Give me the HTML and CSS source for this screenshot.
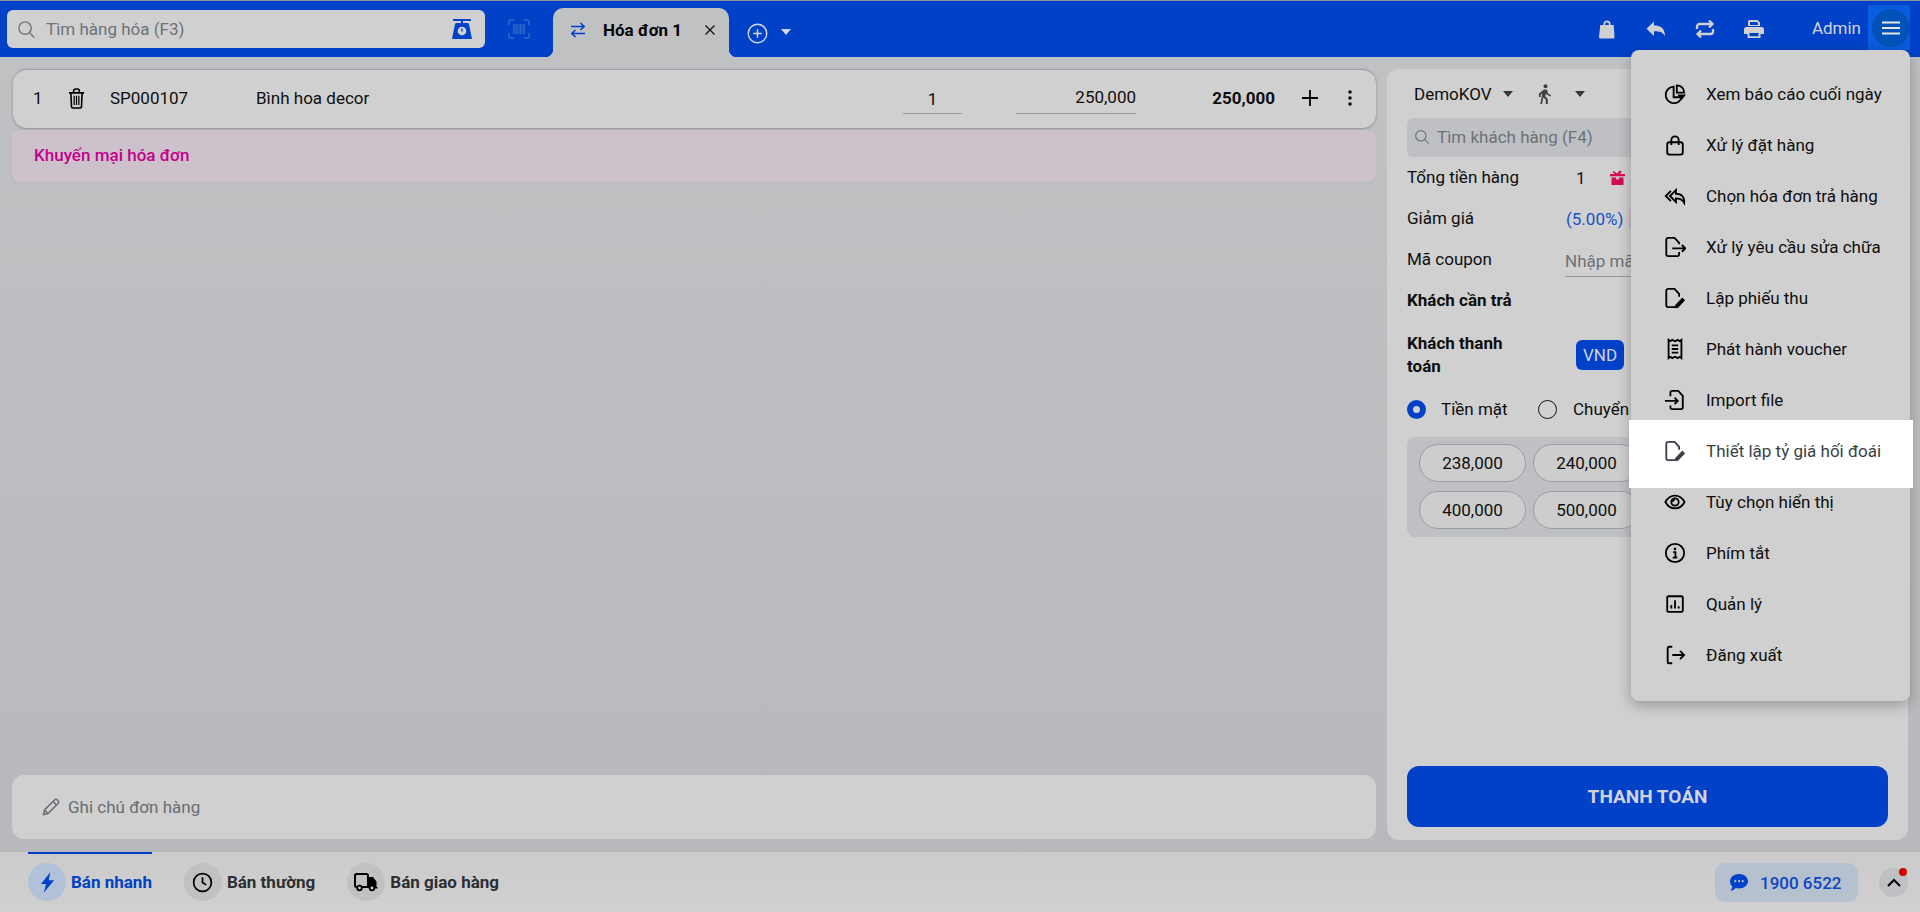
FILE: index.html
```html
<!DOCTYPE html>
<html lang="vi">
<head>
<meta charset="utf-8">
<title>Hóa đơn 1</title>
<link rel="stylesheet" href="styles.css">
</head>
<body>
<header class="topbar">
  <div class="search">
    <svg class="ic-search" viewBox="0 0 20 20"><circle cx="8.500" cy="8.500" r="6.500"/><path d="M13.300 13.300l5 5"/></svg>
    <span class="search-text">Tìm hàng hóa (F3)</span>
    <svg class="ic-scale" viewBox="0 0 20 20"><path d="M1 0h18v2H11v2h4.500c.8 0 1.300.4 1.500 1.200L20 20H0L3 5.200C3.200 4.400 3.700 4 4.500 4H9V2H1z"/><circle cx="10" cy="12" r="4.300" fill="#d0d0d0"/><path d="M10 9.500v3" stroke="#0041c7" stroke-width="1.400"/></svg>
  </div>
  <svg class="ic-barcode" viewBox="0 0 22 20"><path d="M1 6V2.500A1.500 1.500 0 0 1 2.500 1H6M16 1h3.500A1.500 1.500 0 0 1 21 2.500V6M21 14v3.500a1.500 1.500 0 0 1-1.500 1.500H16M6 19H2.500A1.500 1.500 0 0 1 1 17.500V14"/><path d="M5.500 5v10M6.900 5v10M8.300 5v10M9.700 5v10M11.100 5v10M12.500 5v10M13.900 5v10M15.300 5v10M16.500 5v10" stroke-width=".9"/></svg>
  <div class="tab">
    <svg class="ic-swap" viewBox="0 0 18 18"><path d="M2 5.500h13M11.500 2l3.700 3.500L11.500 9M16 12.500H3M6.500 9l-3.700 3.500L6.500 16"/></svg>
    <span class="tab-label">Hóa đơn 1</span>
    <svg class="ic-close" viewBox="0 0 12 12"><path d="M1.500 1.500l9 9M10.500 1.500l-9 9"/></svg>
  </div>
  <svg class="ic-plus-circle" viewBox="0 0 22 22"><circle cx="11" cy="11" r="9.700"/><path d="M11 6.500v9M6.500 11h9"/></svg>
  <span class="caret caret-light"></span>
  <div class="top-actions">
    <svg class="top-ic" viewBox="0 0 20 20"><path d="M6.500 6V5a3.500 3.500 0 0 1 7 0v1h3.200l.8 12a1.500 1.500 0 0 1-1.500 1.500H3.500A1.500 1.500 0 0 1 2 18l1.300-12zM8.200 6h3.600V5a1.800 1.800 0 0 0-3.600 0z" fill-rule="evenodd"/></svg>
    <svg class="top-ic" viewBox="0 0 20 20"><path d="M8 2.500v4c6.500 0 11 2.500 11 11-1.700-4-5-5.200-11-5.200V17L.5 9.700z"/></svg>
    <svg class="top-ic ic-retweet" viewBox="0 0 20 20"><path d="M2 10V7.500A2.500 2.500 0 0 1 4.500 5H17M14 1.500L17.500 5 14 8.500M18 10v2.500a2.500 2.500 0 0 1-2.500 2.500H3M6 11.500L2.500 15 6 18.500"/></svg>
    <svg class="top-ic" viewBox="0 0 20 20"><path d="M4 7V2.500A1.500 1.500 0 0 1 5.500 1h8L16 3.500V7zM6 3v3h8V4l-1-1z" fill-rule="evenodd"/><path d="M2.500 8h15A2.500 2.500 0 0 1 20 10.500V15h-3.500v4h-13v-4H0v-4.500A2.500 2.500 0 0 1 2.500 8zM5.500 14v3.200h9V14z" fill-rule="evenodd"/></svg>
    <span class="admin">Admin</span>
    <button class="menu-btn"><span class="menu-circle"><svg viewBox="0 0 18 14"><path d="M0 1.500h18M0 7h18M0 12.500h18"/></svg></span></button>
  </div>
</header>

<main class="workspace">
  <section class="left-col">
    <div class="line-row">
      <span class="line-no">1</span>
      <svg class="ic-trash" viewBox="0 0 18 22"><path d="M1 5h16M6 5V3a2 2 0 0 1 2-2h2a2 2 0 0 1 2 2v2M3 5l.7 14.500A1.500 1.500 0 0 0 5.200 21h7.600a1.500 1.500 0 0 0 1.500-1.500L15 5"/><path d="M6.500 8v10M9 8v10M11.500 8v10" stroke-width="1.300"/></svg>
      <span class="line-code">SP000107</span>
      <span class="line-name">Bình hoa decor</span>
      <span class="line-qty">1</span>
      <span class="line-price">250,000</span>
      <span class="line-total">250,000</span>
      <svg class="ic-plus" viewBox="0 0 16 16"><path d="M8 0v16M0 8h16"/></svg>
      <svg class="ic-dots" viewBox="0 0 4 16"><circle cx="2" cy="2" r="1.800"/><circle cx="2" cy="8" r="1.800"/><circle cx="2" cy="14" r="1.800"/></svg>
    </div>
    <div class="promo">Khuyến mại hóa đơn</div>
    <div class="note">
      <svg class="ic-pencil" viewBox="0 0 18 18"><path d="M1.500 16.500l1-4.500L12.500 2a2 2 0 0 1 2.800 0l.7.700a2 2 0 0 1 0 2.800L6 15.500zM2.500 12L6 15.500M11 3.500l3.500 3.500"/></svg>
      <span>Ghi chú đơn hàng</span>
    </div>
  </section>

  <aside class="panel">
    <div class="customer-top">
      <span class="store">DemoKOV</span>
      <span class="caret caret-dark"></span>
      <svg class="ic-walk" viewBox="0 0 14 20"><circle cx="7.500" cy="2.300" r="2"/><path d="M6 5.500l3 .3 1 3.700 3 1.500-.7 1.400-3.700-1.800-.5-1.600-.8 3.300 2.500 2.700V20H7.800v-4.200L5.400 13.300 4 20H2.300l2-10.300-1.600.8V13H1V9.500z"/></svg>
      <span class="caret caret-dark caret-walk"></span>
    </div>
    <div class="customer-search">
      <svg class="ic-search" viewBox="0 0 20 20"><circle cx="8.500" cy="8.500" r="6.500"/><path d="M13.300 13.300l5 5"/></svg>
      <span>Tìm khách hàng (F4)</span>
    </div>
    <div class="sum-row">
      <span class="sum-label">Tổng tiền hàng</span>
      <span class="sum-count">1</span>
      <svg class="ic-gift" viewBox="0 0 15 15"><path d="M3.500 1l3.700 2.500L9.500.5 12 1.500 9.500 4H15v2.300H0V4h5L2.500 2zM1.500 7.500h4.700v2h2.600v-2h4.700V15H1.500z"/></svg>
    </div>
    <div class="sum-row">
      <span class="sum-label">Giảm giá</span>
      <span class="sum-percent">(5.00%)</span>
      <span class="sum-chip"></span>
    </div>
    <div class="sum-row">
      <span class="sum-label">Mã coupon</span>
      <span class="coupon">Nhập mã</span>
    </div>
    <div class="sum-row">
      <span class="sum-label sum-strong">Khách cần trả</span>
    </div>
    <div class="sum-row sum-row-tall">
      <span class="sum-label sum-strong">Khách thanh toán</span>
      <span class="currency">VND</span>
    </div>
    <div class="pay-methods">
      <span class="radio radio-on"></span><span class="pay-cash">Tiền mặt</span>
      <span class="radio"></span><span class="pay-bank">Chuyển</span>
    </div>
    <div class="amounts">
      <span class="pill">238,000</span><span class="pill">240,000</span>
      <span class="pill">400,000</span><span class="pill">500,000</span>
    </div>
    <button class="pay-btn">THANH TOÁN</button>
  </aside>
</main>

<footer class="bottombar">
  <div class="mode mode-active">
    <span class="mode-circle"><svg class="ic-bolt" viewBox="0 0 16 22"><path d="M11 0L1 12.500h5.500L4 22l11-13.500H9.300z"/></svg></span>
    <span class="mode-text">Bán nhanh</span>
  </div>
  <div class="mode">
    <span class="mode-circle"><svg class="ic-clock" viewBox="0 0 22 22"><circle cx="11" cy="11" r="9.300"/><path d="M11 5.500V11l3.800 2.500"/></svg></span>
    <span class="mode-text">Bán thường</span>
  </div>
  <div class="mode">
    <span class="mode-circle"><svg class="ic-truck" viewBox="0 0 24 20"><path d="M3 15H2.500A1.500 1.500 0 0 1 1 13.500v-10A1.500 1.500 0 0 1 2.500 2h10A1.500 1.500 0 0 1 14 3.500V15H8" fill="none" stroke="#000" stroke-width="2"/><path d="M14 5h5l3.500 4.500v5.500h1v1.500h-4.200a3 3 0 0 0-5.300 0z"/><circle cx="5.500" cy="16" r="2.300" fill="none" stroke="#000" stroke-width="1.800"/><circle cx="18" cy="16" r="2.300" fill="#ccc" stroke="#000" stroke-width="1.800"/></svg></span>
    <span class="mode-text">Bán giao hàng</span>
  </div>
  <div class="hotline">
    <svg class="ic-chat" viewBox="0 0 18 17"><path d="M9 0c5 0 9 3.200 9 7.200s-4 7.200-9 7.200c-1.200 0-2.300-.2-3.300-.5C4.500 15.500 2.500 16.500.5 16.500c1-1.100 1.700-2.500 1.800-4C.9 11.100 0 9.300 0 7.200 0 3.200 4 0 9 0z"/><circle cx="5.300" cy="7.200" r="1.100" fill="#b5c1cf"/><circle cx="9" cy="7.200" r="1.100" fill="#b5c1cf"/><circle cx="12.700" cy="7.200" r="1.100" fill="#b5c1cf"/></svg>
    <span>1900 6522</span>
  </div>
  <button class="collapse">
    <svg viewBox="0 0 14 9"><path d="M1 8l6-6 6 6"/></svg>
    <span class="red-dot"></span>
  </button>
</footer>

<nav class="dropdown">
  <a class="drop-item"><svg viewBox="0 0 24 24"><path d="M10.500 4a9 9 0 1 0 9 11.500h-9z"/><path d="M14 2.500a8 8 0 0 1 8 8h-8z"/><path d="M14.500 12.500h9.500l-4.700 6z" fill="#000" stroke="none"/></svg><span>Xem báo cáo cuối ngày</span></a>
  <a class="drop-item"><svg viewBox="0 0 24 24"><rect x="3.500" y="9" width="17" height="13.500" rx="2.500"/><path d="M8 12V6.500a4 4 0 0 1 8 0V12"/></svg><span>Xử lý đặt hàng</span></a>
  <a class="drop-item"><svg viewBox="0 0 24 24"><path d="M7.500 6.500L2 12l5.500 5.500M13 5.500L6.500 12l6.500 6.500V14.500c4.500 0 7 1 9 5 .6-6-2.500-10-9-10z"/></svg><span>Chọn hóa đơn trả hàng</span></a>
  <a class="drop-item"><svg viewBox="0 0 24 24"><path d="M16.500 9V7.500L11.500 2h-7A2 2 0 0 0 2.500 4v16a2 2 0 0 0 2 2h10a2 2 0 0 0 2-2v-2.500M9 13.500h14.500M19.500 9.800l3.700 3.700-3.700 3.700"/></svg><span>Xử lý yêu cầu sửa chữa</span></a>
  <a class="drop-item"><svg viewBox="0 0 24 24"><path d="M16.500 10.500V7.500L11.500 2h-7A2 2 0 0 0 2.500 4v16a2 2 0 0 0 2 2H12"/><path d="M15 22.500h-2.500V20l7.500-8 2.500 2.500z" fill="#000" stroke-width="1"/></svg><span>Lập phiếu thu</span></a>
  <a class="drop-item"><svg viewBox="0 0 24 24"><path d="M5 2l2 1.500L9 2l3 1.500L15 2l2 1.500L19 2v20l-2-1.500-2 1.500-3-1.500L9 22l-2-1.500L5 22z"/><path d="M8.500 8h7M8.500 12h7M8.500 16h7"/></svg><span>Phát hành voucher</span></a>
  <a class="drop-item"><svg viewBox="0 0 24 24"><path d="M7 8V4a2 2 0 0 1 2-2h6.500l5 5.500V20a2 2 0 0 1-2 2H9a2 2 0 0 1-2-2v-2M1 13h14M11.500 9.500L15 13l-3.500 3.500"/></svg><span>Import file</span></a>
  <a class="drop-item drop-hover"><svg viewBox="0 0 24 24"><path d="M16.500 10.500V7.500L11.500 2h-7A2 2 0 0 0 2.500 4v16a2 2 0 0 0 2 2H12"/><path d="M15 22.500h-2.500V20l7.500-8 2.500 2.500z" fill="currentColor" stroke-width="1"/></svg><span>Thiết lập tỷ giá hối đoái</span></a>
  <a class="drop-item"><svg viewBox="0 0 24 24"><path d="M1.500 12C4 7.500 7.500 5 12 5s8 2.500 10.500 7c-2.500 4.500-6 7-10.500 7s-8-2.500-10.500-7z"/><circle cx="12" cy="12" r="4"/><path d="M12 9.500a2.500 2.500 0 0 0-2.500 2.500" stroke-width="1.500"/></svg><span>Tùy chọn hiển thị</span></a>
  <a class="drop-item"><svg viewBox="0 0 24 24"><circle cx="12" cy="12" r="10"/><path d="M10 11h2.500v6M9.500 17h5" stroke-width="2"/><circle cx="12" cy="7.500" r="1.400" fill="#000" stroke="none"/></svg><span>Phím tắt</span></a>
  <a class="drop-item"><svg viewBox="0 0 24 24"><rect x="3.500" y="3.500" width="17" height="17" rx="1.500"/><path d="M8 17v-4M12 17V8M16 17v-2.500"/></svg><span>Quản lý</span></a>
  <a class="drop-item"><svg viewBox="0 0 24 24"><path d="M9 3H5.500A1.500 1.500 0 0 0 4 4.500v15A1.500 1.500 0 0 0 5.500 21H9M9 12h13M17.500 7.500L22 12l-4.500 4.500"/></svg><span>Đăng xuất</span></a>
</nav>
</body>
</html>
```
FILE: styles.css
```css
* { box-sizing: border-box; }
html, body { margin: 0; height: 100%; }
body {
  position: relative;
  width: 1920px;
  height: 912px;
  overflow: hidden;
  display: flex;
  flex-direction: column;
  font-family: Roboto, "Liberation Sans", sans-serif;
  font-size: 17px;
  color: #0e0e0e;
  background: #bdbec0;
}
svg { display: block; flex: none; }
button { font: inherit; border: 0; padding: 0; }

/* top bar */
.topbar {
  height: 57px;
  flex: none;
  display: flex;
  align-items: flex-start;
  padding-left: 7px;
  background: #0041c7;
  border-top: 1px solid #8c93a3;
}
.search {
  width: 478px;
  height: 38px;
  margin-top: 9px;
  display: flex;
  align-items: center;
  padding: 0 13px 0 10px;
  background: #d0d0d0;
  border-radius: 6px;
}
.ic-search { width: 19px; height: 19px; fill: none; stroke: #70767d; stroke-width: 1.500; }
.search-text { margin-left: 10px; color: #6c7278; }
.ic-scale { margin-left: auto; width: 20px; height: 20px; fill: #0041c7; }
.ic-barcode { margin: 18px 0 0 23px; width: 22px; height: 20px; fill: none; stroke: #2f6ccb; stroke-width: 1.500; }
.tab {
  position: relative;
  width: 176px;
  height: 49px;
  margin: 7px 0 0 23px;
  display: flex;
  align-items: center;
  background: #c0c1c3;
  border-radius: 10px 10px 0 0;
  padding: 0 0 6px 16px;
}
.tab::before, .tab::after {
  content: "";
  position: absolute;
  bottom: 0;
  width: 8px;
  height: 8px;
}
.tab::before { left: -8px; background: radial-gradient(circle at 0 0, transparent 8px, #c0c1c3 8.500px); }
.tab::after { right: -8px; background: radial-gradient(circle at 100% 0, transparent 8px, #c0c1c3 8.500px); }
.ic-swap { width: 18px; height: 18px; fill: none; stroke: #0041c7; stroke-width: 1.600; }
.tab-label { margin-left: 16px; font-weight: 700; color: #050505; }
.ic-close { margin-left: 22px; width: 12px; height: 12px; fill: none; stroke: #111; stroke-width: 1.300; }
.ic-plus-circle { margin: 22px 0 0 18px; width: 21px; height: 21px; fill: none; stroke: #d4dbef; stroke-width: 1.500; }
.caret { display: block; width: 0; height: 0; border-style: solid; border-width: 6px 5.500px 0; border-color: transparent; }
.caret-light { margin: 28px 0 0 13px; border-top-color: #d0d8ee; }
.top-actions { margin-left: auto; display: flex; align-items: flex-start; margin-right: 10px; }
.top-ic { width: 20px; height: 20px; margin: 18px 29px 0 0; fill: #d0d0d0; }
.ic-retweet { fill: none; stroke: #d0d0d0; stroke-width: 2.300; }
.admin { margin: 17px 7px 0 19px; color: #d0d3dc; line-height: 20px; }
.menu-btn {
  width: 42px;
  height: 45px;
  margin-top: 4px;
  display: flex;
  align-items: center;
  justify-content: flex-end;
  background: #0a5ce0;
}
.menu-circle {
  width: 38px;
  height: 38px;
  display: flex;
  align-items: center;
  justify-content: center;
  border-radius: 50%;
  background: #0052b9;
}
.menu-circle svg { width: 18px; height: 14px; fill: none; stroke: #e6e8ee; stroke-width: 2; }

/* workspace */
.workspace {
  flex: 1;
  min-height: 0;
  display: flex;
  gap: 11px;
  padding: 12px;
  background: linear-gradient(#c0c1c3, #b8b9bc);
}
.left-col {
  width: 1364px;
  display: flex;
  flex-direction: column;
  padding-bottom: 1px;
}
.line-row {
  height: 59px;
  margin-left: 1px;
  display: flex;
  align-items: center;
  background: #d0d0d0;
  border-radius: 14px;
  border-top: 1px solid #9b9ea6;
  box-shadow: 0 1px 3px #8b8e96;
  padding: 0 0 2px 20px;
}
.line-no { width: 35px; }
.ic-trash { width: 17px; height: 21px; fill: none; stroke: #000; stroke-width: 1.700; }
.line-code { margin-left: 25px; width: 146px; }
.line-name { width: 647px; }
.line-qty {
  width: 59px;
  height: 30px;
  margin-top: 2px;
  line-height: 30px;
  text-align: center;
  border-bottom: 1px solid #9a9a9a;
}
.line-price {
  width: 120px;
  height: 30px;
  margin: 2px 0 0 54px;
  line-height: 26px;
  text-align: right;
  border-bottom: 1px solid #9a9a9a;
}
.line-total { width: 139px; text-align: right; font-weight: 700; }
.ic-plus { margin-left: 27px; width: 16px; height: 16px; fill: none; stroke: #000; stroke-width: 1.800; }
.ic-dots { margin-left: 30px; width: 4px; height: 16px; fill: #111; }
.promo {
  height: 52px;
  margin-top: 2px;
  padding: 0 0 3px 22px;
  display: flex;
  align-items: center;
  background: #cdc2cc;
  border-radius: 8px;
  box-shadow: 0 1px 2px #b5b6b9;
  color: #c4008c;
  font-weight: 500;
}
.note {
  height: 64px;
  margin-top: auto;
  display: flex;
  align-items: center;
  padding: 0 0 1px 30px;
  background: #d0d0d0;
  border-radius: 12px;
  color: #686d74;
}
.ic-pencil { width: 18px; height: 18px; margin-right: 8px; fill: none; stroke: #686d74; stroke-width: 1.500; }

/* right panel */
.panel {
  width: 521px;
  padding: 0 20px 13px;
  display: flex;
  flex-direction: column;
  background: #d0d0d0;
  border-radius: 12px;
}
.customer-top { height: 49px; display: flex; align-items: center; padding-left: 7px; }
.caret-dark { border-top-color: #33363b; }
.customer-top .caret-dark { margin-left: 11px; }
.ic-walk { margin-left: 25px; width: 14px; height: 20px; fill: #3d4045; }
.customer-top .caret-walk { margin-left: 23px; }
.customer-search {
  height: 39px;
  flex: none;
  display: flex;
  align-items: center;
  gap: 7px;
  padding: 0 0 1px 7px;
  background: #bfc0c3;
  border-radius: 6px;
  color: #6c7278;
}
.customer-search .ic-search { width: 16px; height: 16px; }
.sum-row { height: 41px; flex: none; display: flex; align-items: center; }
.sum-row-tall { height: 67px; }
.sum-label { width: 128px; line-height: 23px; }
.sum-strong { font-weight: 700; }
.sum-count { margin-left: 41px; }
.ic-gift { margin-left: 24px; width: 15px; height: 15px; fill: #d40a55; }
.sum-percent { margin-left: 31px; color: #1453c9; }
.sum-chip { width: 30px; height: 22px; margin-left: 5px; background: #cdbdcb; border-radius: 4px; }
.coupon {
  margin: 3px 0 0 30px;
  width: 220px;
  height: 31px;
  line-height: 30px;
  color: #6c7278;
  border-bottom: 1px solid #9a9a9a;
}
.currency {
  width: 48px;
  height: 30px;
  margin: 1px 0 0 41px;
  display: flex;
  align-items: center;
  justify-content: center;
  background: #0041c7;
  border-radius: 6px;
  color: #d0d3dc;
}
.pay-methods { height: 42px; flex: none; display: flex; align-items: center; }
.radio { width: 19px; height: 19px; border: 1.500px solid #111; border-radius: 50%; }
.radio-on { border: 6px solid #0041c7; background: #d0d0d0; }
.pay-cash { margin-left: 15px; width: 97px; }
.pay-bank { margin-left: 16px; }
.amounts {
  height: 100px;
  margin-top: 7px;
  flex: none;
  display: grid;
  grid-template-columns: repeat(2, 107px);
  grid-auto-rows: 38px;
  gap: 9px 7px;
  padding: 7px 12px;
  background: #bfc0c3;
  border-radius: 8px;
}
.pill {
  display: flex;
  align-items: center;
  justify-content: center;
  border: 1px solid #9b9ea4;
  border-radius: 19px;
  background: #cdcdcd;
}
.pay-btn {
  height: 61px;
  flex: none;
  margin-top: auto;
  background: #0041c7;
  border-radius: 12px;
  color: #d0d3dc;
  font-size: 19px;
  font-weight: 700;
}

/* bottom bar */
.bottombar {
  height: 60px;
  flex: none;
  display: flex;
  align-items: flex-start;
  gap: 32px;
  padding-left: 28px;
  background: linear-gradient(#cbcbcb, #d0d0d0);
}
.mode {
  height: 60px;
  display: flex;
  align-items: center;
  gap: 5px;
  padding-bottom: 2px;
  border-top: 2px solid transparent;
}
.mode-active { border-top-color: #0041c7; color: #0041c7; }
.mode-circle {
  width: 38px;
  height: 38px;
  display: flex;
  align-items: center;
  justify-content: center;
  border-radius: 50%;
  background: #c0c1c3;
}
.mode-active .mode-circle { background: #b0c1d9; }
.mode-text { font-weight: 700; color: #2c2e33; }
.mode-active .mode-text { color: #0041c7; }
.ic-bolt { width: 15px; height: 21px; fill: #0041c7; }
.ic-clock { width: 21px; height: 21px; fill: none; stroke: #000; stroke-width: 1.800; }
.ic-truck { width: 24px; height: 20px; fill: #000; }
.hotline {
  margin: 11px 0 0 auto;
  width: 143px;
  height: 39px;
  display: flex;
  align-items: center;
  gap: 12px;
  padding-left: 15px;
  background: #b5c1cf;
  border-radius: 10px;
  color: #0e45c2;
  font-weight: 500;
}
.ic-chat { width: 18px; height: 17px; fill: #0041c7; }
.collapse {
  position: relative;
  width: 29px;
  height: 29px;
  margin: 16px 12px 0 -11px;
  display: flex;
  align-items: center;
  justify-content: center;
  border-radius: 50%;
  background: #bfc0c3;
}
.collapse svg { width: 14px; height: 9px; fill: none; stroke: #000; stroke-width: 2; }
.red-dot {
  position: absolute;
  top: 0;
  right: 1px;
  width: 8px;
  height: 8px;
  border-radius: 50%;
  background: #d40000;
}

/* dropdown */
.dropdown {
  position: absolute;
  left: 1631px;
  top: 50px;
  width: 279px;
  height: 651px;
  padding-top: 19px;
  display: flex;
  flex-direction: column;
  background: #d0d0d0;
  border-radius: 8px;
  box-shadow: 0 4px 14px rgba(0, 0, 0, .28);
}
.drop-item {
  height: 51px;
  flex: none;
  display: flex;
  align-items: center;
  padding: 0 0 2px 33px;
  color: #0e0e0e;
}
.drop-item svg {
  width: 22px;
  height: 22px;
  margin-right: 20px;
  fill: none;
  stroke: #000;
  stroke-width: 2;
}
.drop-hover {
  height: 68px;
  margin: -6px -3px -11px -2px;
  padding: 6px 0 13px 35px;
  background: #fff;
  color: #3a3f46;
}
.drop-hover svg { stroke: #3a3f46; }
```
